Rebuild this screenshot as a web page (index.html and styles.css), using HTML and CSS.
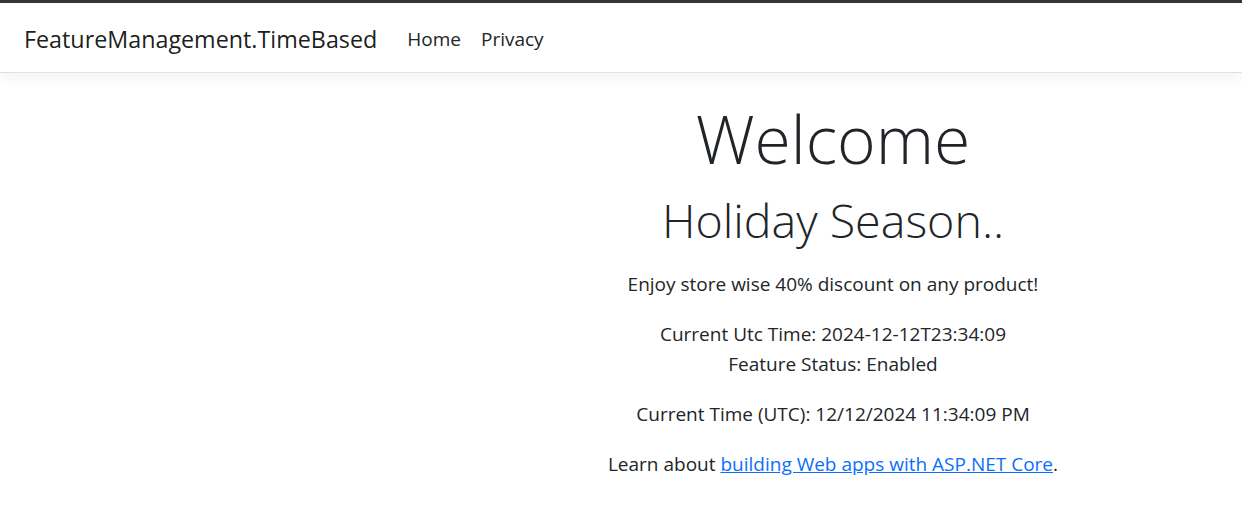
FILE: index.html
```html
<!DOCTYPE html>
<html lang="en">
<head>
<meta charset="utf-8">
<title>FeatureManagement.TimeBased</title>
<link rel="stylesheet" href="styles.css">
</head>
<body>
<div class="frame-top"></div>
<header class="navbar">
  <a class="brand" href="#">FeatureManagement.TimeBased</a>
  <nav class="nav">
    <a class="nav-link" href="#">Home</a>
    <a class="nav-link" href="#">Privacy</a>
  </nav>
</header>
<main class="content">
  <h1 class="display">Welcome</h1>
  <h1 class="headline">Holiday Season..</h1>
  <p class="lead">Enjoy store wise 40% discount on any product!</p>
  <p class="text">Current Utc Time: 2024-12-12T23:34:09<br>Feature Status: Enabled</p>
  <p class="text">Current Time (UTC): 12/12/2024 11:34:09 PM</p>
  <p class="text">Learn about <a class="link" href="#">building Web apps with ASP.NET Core</a>.</p>
</main>
</body>
</html>
```
FILE: styles.css
```css
html, body {
  margin: 0;
  padding: 0;
  background: #ffffff;
}
body {
  font-family: "Open Sans", "Noto Sans", sans-serif;
  color: #212529;
  font-size: 19px;
  line-height: 30px;
}
.frame-top {
  height: 3px;
  background: #363636;
}
.navbar {
  display: flex;
  align-items: center;
  height: 67px;
  padding-top: 2px;
  padding-left: 24px;
  border-bottom: 1px solid #dee2e6;
  box-shadow: 0 5px 15px rgba(0, 0, 0, 0.05);
  position: relative;
  background: #fff;
}
.brand {
  font-size: 23.3px;
  line-height: 30px;
  color: rgba(0, 0, 0, 0.9);
  text-decoration: none;
  margin-right: 20px;
}
.nav {
  display: flex;
}
.nav-link {
  color: #212529;
  text-decoration: none;
  padding: 0 10px;
  font-size: 19px;
  line-height: 30px;
}
.content {
  padding-left: 424px;
  text-align: center;
  padding-top: 25px;
}
.display {
  font-weight: 300;
  font-size: 66px;
  line-height: 80px;
  margin: 0 0 12px;
}
.headline {
  font-weight: 300;
  font-size: 46.6px;
  line-height: 60px;
  margin: 0 0 19px;
}
.lead, .text {
  margin: 0 0 20px;
}
.link {
  color: #0d6efd;
  text-decoration: underline;
}
```
